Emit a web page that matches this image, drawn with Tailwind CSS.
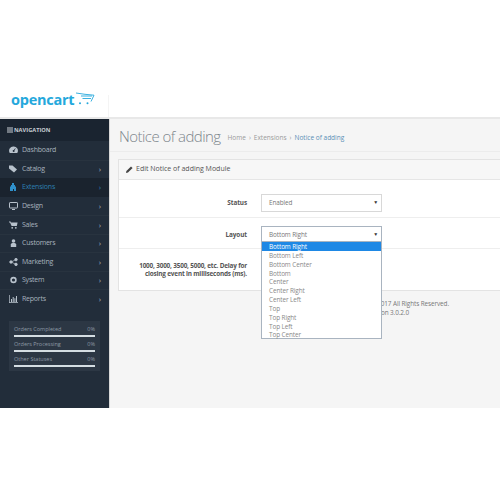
<!doctype html>
<html><head><meta charset="utf-8"><script src="https://cdn.jsdelivr.net/npm/@tailwindcss/browser@4"></script></head>
<body class="bg-white">
<div class="w-[500px] h-[500px] overflow-hidden flex flex-col font-['Open_Sans',sans-serif] text-[#666]">
  <header class="h-[119px] flex-none flex items-end border-b-2 border-[#e8e8e8]">
    <div class="w-[109px] h-[22px] border-r border-[#f4f4f4] pl-[11px] flex items-start relative">
      <span class="text-[14.5px] leading-[20px] font-bold text-[#25a8dc] tracking-[-0.25px] -mt-[5px]">opencart</span>
      <svg class="w-[21px] h-[14px] -mt-[3px] ml-[1px]" viewBox="0 0 21 14" fill="none"><path d="M1 1 Q 10 2.5 19 3.2 L16 9.5 M6 4 H17 M7.5 6.5 H16" stroke="#25a8dc" stroke-width=".9"/><circle cx="5" cy="11.3" r="1" fill="#25a8dc"/><circle cx="12.5" cy="11.3" r="1" fill="#25a8dc"/></svg>
    </div>
  </header>
  <div class="h-[289px] flex-none flex">
    <aside class="w-[110px] flex-none bg-[#222d3a] border-r border-[#d8d8d8] flex flex-col">
      <div class="h-[22px] bg-[#1a2430] flex items-center pl-[7px] gap-[1px] text-[5.7px] font-bold text-[#c8ced4]">
        <svg class="w-[6px] h-[6px]" viewBox="0 0 6 6" fill="#c8ced4"><path d="M0 .5h6v1H0zM0 2.5h6v1H0zM0 4.5h6v1H0z"/></svg>NAVIGATION
      </div>
      <nav class="flex flex-col text-[7px] tracking-[-0.22px] text-[#a8b3be]">
        <a class="h-[18.5px] flex items-center pl-[9px] pr-[8px]"><svg class="w-[9px] h-[8px] mr-[4px]" viewBox="0 0 9 8" fill="#b8c2cc"><path d="M4.5 0.5A4.2 4.2 0 0 0 .8 7h7.4A4.2 4.2 0 0 0 4.5.5zM4.5 6a1 1 0 1 1 .3-2l1.4-1.8.5.4L5.4 4.4A1 1 0 0 1 4.5 6z"/></svg><span>Dashboard</span></a>
        <a class="h-[18.5px] flex items-center pl-[9px] pr-[8px] border-t border-[#28333f]"><svg class="w-[9px] h-[8px] mr-[4px]" viewBox="0 0 9 8" fill="#b8c2cc"><path d="M0 .5h3.5L8 4.5 5 7.5 0 3.5z"/></svg><span class="flex-1">Catalog</span><span class="text-[8px]">›</span></a>
        <a class="h-[18.5px] flex items-center pl-[9px] pr-[8px] bg-[#1a232e] text-[#2d7fb0]"><svg class="w-[9px] h-[8px] mr-[4px]" viewBox="0 0 9 8" fill="#2f90cb"><path d="M3 0h2v2h1v1.5h1V8H5V6H4v2H1V3.5h1V2h1z"/></svg><span class="flex-1">Extensions</span><span class="text-[8px]">›</span></a>
        <a class="h-[18.5px] flex items-center pl-[9px] pr-[8px]"><svg class="w-[9px] h-[8px] mr-[4px]" viewBox="0 0 9 8" fill="none" stroke="#b8c2cc"><rect x=".5" y=".5" width="8" height="5.5" rx=".6"/><path d="M3 7.5h3"/></svg><span class="flex-1">Design</span><span class="text-[8px]">›</span></a>
        <a class="h-[18.5px] flex items-center pl-[9px] pr-[8px] border-t border-[#28333f]"><svg class="w-[9px] h-[8px] mr-[4px]" viewBox="0 0 9 8" fill="#b8c2cc"><path d="M0 .5h1.6l.3 1H8.6L7.8 5H2.6L1 1.4H0z"/><circle cx="3.2" cy="6.8" r=".9"/><circle cx="6.8" cy="6.8" r=".9"/></svg><span class="flex-1">Sales</span><span class="text-[8px]">›</span></a>
        <a class="h-[18.5px] flex items-center pl-[9px] pr-[8px] border-t border-[#28333f]"><svg class="w-[9px] h-[8px] mr-[4px]" viewBox="0 0 9 8" fill="#b8c2cc"><circle cx="4.5" cy="2" r="1.8"/><path d="M1.8 8V5.5Q1.8 4 3.5 4h2q1.7 0 1.7 1.5V8z"/></svg><span class="flex-1">Customers</span><span class="text-[8px]">›</span></a>
        <a class="h-[18.5px] flex items-center pl-[9px] pr-[8px] border-t border-[#28333f]"><svg class="w-[9px] h-[8px] mr-[4px]" viewBox="0 0 9 8" fill="#b8c2cc" stroke="#b8c2cc" stroke-width=".7"><circle cx="2" cy="4" r="1.3"/><circle cx="7" cy="1.6" r="1.3"/><circle cx="7" cy="6.4" r="1.3"/><path d="M2 4l5-2.4M2 4l5 2.4"/></svg><span class="flex-1">Marketing</span><span class="text-[8px]">›</span></a>
        <a class="h-[18.5px] flex items-center pl-[9px] pr-[8px] border-t border-[#28333f]"><svg class="w-[9px] h-[8px] mr-[4px]" viewBox="0 0 9 8" fill="none" stroke="#b8c2cc" stroke-width="1.6"><circle cx="4.5" cy="4" r="2.4"/></svg><span class="flex-1">System</span><span class="text-[8px]">›</span></a>
        <a class="h-[18.5px] flex items-center pl-[9px] pr-[8px] border-t border-[#28333f]"><svg class="w-[9px] h-[8px] mr-[4px]" viewBox="0 0 9 8" fill="#b8c2cc"><path d="M0 0h.7v7.3H9V8H0zM2 4h1v3H2zM3.7 2h1v5h-1zM5.4 3.2h1V7h-1zM7 1h1v6H7z"/></svg><span class="flex-1">Reports</span><span class="text-[8px]">›</span></a>
      </nav>
      <div class="mt-[13px] mx-[9px] h-[50px] bg-[#2c3744] px-[5px] pt-[4px] text-[5.5px] text-[#8d99a5] flex flex-col">
        <div class="h-[15px]"><div class="flex justify-between leading-[9px]"><span>Orders Completed</span><span>0%</span></div><div class="h-[2px] bg-[#d4dde2] mt-[1px]"></div></div>
        <div class="h-[15px]"><div class="flex justify-between leading-[9px]"><span>Orders Processing</span><span>0%</span></div><div class="h-[2px] bg-[#d4dde2] mt-[1px]"></div></div>
        <div class="h-[15px]"><div class="flex justify-between leading-[9px]"><span>Other Statuses</span><span>0%</span></div><div class="h-[2px] bg-[#d4dde2] mt-[1px]"></div></div>
      </div>
    </aside>
    <main class="flex-1 bg-[#f5f5f5] flex flex-col relative min-w-0">
      <div class="h-[33px] flex items-center pl-[9px] pt-[3px] border-b border-[#ececec] whitespace-nowrap">
        <h1 class="text-[15px] font-light text-[#7d868c] leading-none tracking-[-0.55px]">Notice of adding</h1>
        <div class="ml-[7px] mt-[3px] text-[6.5px] text-[#9a9a9a] flex gap-[3px]"><span>Home</span><span>›</span><span>Extensions</span><span>›</span><span class="text-[#5a8fb5]">Notice of adding</span></div>
      </div>
      <section class="mt-[7px] ml-[8px] bg-white border border-[#e3e3e3] h-[132px] w-[400px] flex flex-col text-[6.4px] tracking-[-0.1px]">
        <div class="h-[20px] flex-none bg-[#f7f7f7] border-b border-[#e6e6e6] flex items-center pl-[7px] gap-[3px] text-[7px] tracking-normal text-[#555]">
          <svg class="w-[7px] h-[7px]" viewBox="0 0 7 7" fill="#444"><path d="M0 7l.4-2L5 .4l1.6 1.6L2 6.6z"/></svg>Edit Notice of adding Module
        </div>
        <div class="h-[38px] flex-none flex items-center pt-[8px] border-b border-[#eee]">
          <label class="w-[128px] text-right font-bold text-[#555]">Status</label>
          <div class="ml-[14px] w-[121px] h-[18px] border border-[#d8d8d8] flex items-center justify-between pl-[7px] pr-[3px] text-[#777] bg-white">Enabled<span class="text-[5px] text-[#333]">▼</span></div>
        </div>
        <div class="h-[31px] flex-none flex items-center pt-[3px] border-b border-[#eee]">
          <label class="w-[128px] text-right font-bold text-[#555]">Layout</label>
          <div class="ml-[14px] w-[121px] h-[18px] border border-[#a9b4c0] flex items-center justify-between pl-[7px] pr-[3px] text-[#777] bg-white">Bottom Right<span class="text-[5px] text-[#333]">▼</span></div>
        </div>
        <div class="flex-1 flex items-center">
          <label class="w-[128px] text-right font-bold text-[#555] leading-[8px] tracking-[-0.18px]">1000, 3000, 3500, 5000, etc. Delay for closing event in milliseconds (ms).</label>
        </div>
      </section>
      <footer class="mt-[8px] w-[339px] text-[6.4px] tracking-[-0.1px] leading-[9px] text-[#777] text-right whitespace-nowrap">
        <div>OpenCart © 2009-2017 All Rights Reserved.</div>
        <div class="pr-[40px]">Version 3.0.2.0</div>
      </footer>
      <ul class="absolute left-[151px] top-[122px] w-[121px] h-[98px] bg-white border border-[#a9b4c0] text-[6.4px] tracking-[-0.1px] text-[#888] flex flex-col">
        <li class="h-[9px] flex-none leading-[10px] pl-[7px] bg-[#1e88e5] text-white">Bottom Right</li>
        <li class="h-[8.84px] leading-[10px] pl-[7px]">Bottom Left</li>
        <li class="h-[8.84px] leading-[10px] pl-[7px]">Bottom Center</li>
        <li class="h-[8.84px] leading-[10px] pl-[7px]">Bottom</li>
        <li class="h-[8.84px] leading-[10px] pl-[7px]">Center</li>
        <li class="h-[8.84px] leading-[10px] pl-[7px]">Center Right</li>
        <li class="h-[8.84px] leading-[10px] pl-[7px]">Center Left</li>
        <li class="h-[8.84px] leading-[10px] pl-[7px]">Top</li>
        <li class="h-[8.84px] leading-[10px] pl-[7px]">Top Right</li>
        <li class="h-[8.84px] leading-[10px] pl-[7px]">Top Left</li>
        <li class="h-[8.84px] leading-[10px] pl-[7px]">Top Center</li>
      </ul>
    </main>
  </div>
</div>
</body></html>
